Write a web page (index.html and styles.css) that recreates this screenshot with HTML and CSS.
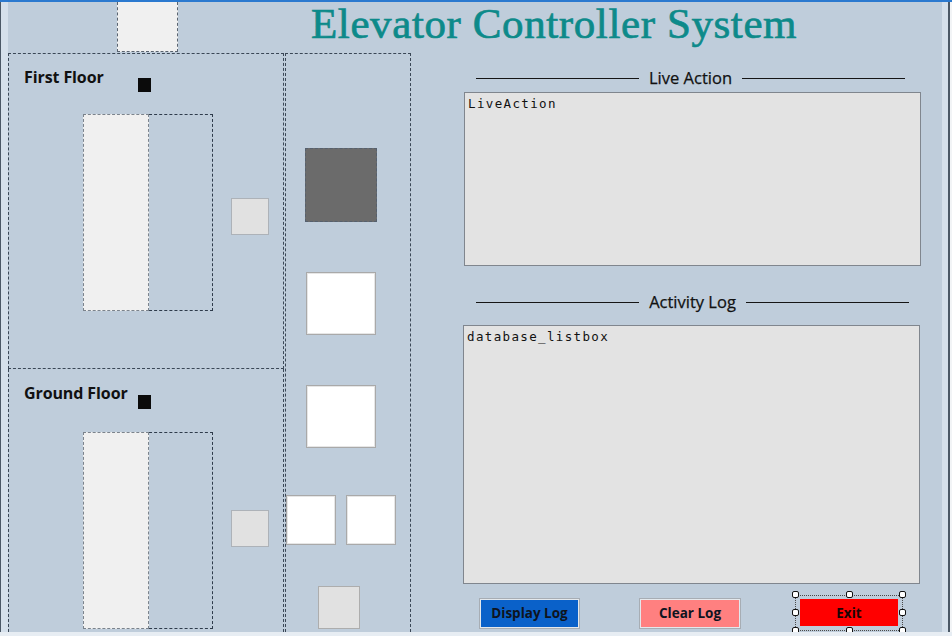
FILE: index.html
```html
<!DOCTYPE html>
<html>
<head>
<meta charset="utf-8">
<title>Elevator Controller System</title>
<link rel="stylesheet" href="styles.css">
</head>
<body>
<div class="window">
  <header class="header">
    <div class="tab-box"></div>
    <h1 class="title">Elevator Controller System</h1>
  </header>
  <main class="body">
    <section class="floors">
      <div class="floor floor-first">
        <div class="floor-head">
          <span class="floor-label">First Floor</span>
          <span class="indicator"></span>
        </div>
        <div class="floor-body">
          <div class="shaft"><div class="car"></div></div>
          <div class="call-btn"></div>
        </div>
      </div>
      <div class="floor floor-ground">
        <div class="floor-head">
          <span class="floor-label">Ground Floor</span>
          <span class="indicator"></span>
        </div>
        <div class="floor-body">
          <div class="shaft"><div class="car"></div></div>
          <div class="call-btn"></div>
        </div>
      </div>
    </section>
    <section class="controls">
      <div class="ctl ctl-dark"></div>
      <div class="ctl ctl-white ctl-w1"></div>
      <div class="ctl ctl-white ctl-w2"></div>
      <div class="ctl-pair">
        <div class="ctl ctl-small"></div>
        <div class="ctl ctl-small"></div>
      </div>
      <div class="ctl ctl-grey"></div>
    </section>
    <section class="logs">
      <div class="group-head head-live">
        <span class="rule"></span><span class="group-title">Live Action</span><span class="rule"></span>
      </div>
      <div class="textbox live">LiveAction</div>
      <div class="group-head head-activity">
        <span class="rule"></span><span class="group-title">Activity Log</span><span class="rule"></span>
      </div>
      <div class="textbox listbox">database_listbox</div>
      <div class="buttons">
        <div class="btn btn-display">Display Log</div>
        <div class="btn btn-clear">Clear Log</div>
        <div class="exit-select">
          <div class="btn-exit">Exit</div>
          <span class="handle h-tl"></span><span class="handle h-tc"></span><span class="handle h-tr"></span>
          <span class="handle h-ml"></span><span class="handle h-mr"></span>
          <span class="handle h-bl"></span><span class="handle h-bc"></span><span class="handle h-br"></span>
        </div>
      </div>
    </section>
  </main>
</div>
</body>
</html>
```
FILE: styles.css
```css
* { box-sizing: border-box; }
html, body { margin: 0; padding: 0; }
body {
  width: 952px;
  height: 636px;
  overflow: hidden;
  font-family: "Open Sans", "Noto Sans", sans-serif;
  color: #111;
}
.window {
  width: 952px;
  height: 636px;
  display: flex;
  flex-direction: column;
  border-top: 2px solid #2b79cf;
  border-bottom: 4px solid #e7edf3;
  padding-right: 10px;
  overflow: hidden;
  background:
    linear-gradient(to right, #4b5866 0 1px, #d5e0eb 1px 8px, transparent 8px),
    linear-gradient(to left, #f2f4f6 0 2px, #4b5866 2px 4px, #d5e0eb 4px 10px, #bfcddb 10px);
}
.header {
  height: 51px;
  flex-shrink: 0;
  display: flex;
  align-items: flex-start;
}
.tab-box {
  margin-left: 117px;
  width: 61px;
  height: 50px;
  background: #f0f0f0;
  border: 1px dashed #5a6470;
  border-top: none;
}
.title {
  margin: 1px 0 0 133px;
  font-family: "Liberation Serif", "Times New Roman", serif;
  font-weight: 400;
  font-size: 43px;
  line-height: 42px;
  letter-spacing: 0.6px;
  -webkit-text-stroke: 0.7px #0d8a8a;
  color: #0d8a8a;
  white-space: nowrap;
}
.body {
  flex: 1;
  min-height: 0;
  display: flex;
  padding-left: 8px;
}
.floors {
  width: 276px;
  flex-shrink: 0;
  display: flex;
  flex-direction: column;
}
.floor {
  border: 1px dashed #3a4756;
  padding-left: 15px;
}
.floor-first {
  height: 316px;
  padding-top: 13px;
}
.floor-ground {
  flex: 1;
  border-top: none;
  border-bottom: none;
  padding-top: 14px;
}
.floor-head {
  display: flex;
  align-items: flex-start;
  height: 20px;
}
.floor-label {
  flex: 0 0 114px;
  font-weight: 700;
  font-size: 16px;
  line-height: 20px;
  letter-spacing: -0.1px;
  color: #111;
  white-space: nowrap;
}
.indicator {
  width: 13px;
  height: 14px;
  background: #0b0b0b;
  margin-top: 11px;
}
.floor-ground .indicator { margin-top: 12px; }
.floor-body {
  display: flex;
  align-items: flex-start;
  margin-left: 59px;
}
.floor-first .floor-body { margin-top: 27px; }
.floor-ground .floor-body { margin-top: 29px; }
.shaft {
  width: 130px;
  height: 197px;
  border: 1px dashed #2e3b4b;
  display: flex;
}
.car {
  width: 66px;
  margin: -1px 0 -1px -1px;
  border: 1px dashed #7b838c;
  background: #f0f0f0;
}
.call-btn {
  width: 38px;
  height: 37px;
  margin-left: 18px;
  background: #e1e1e1;
  border: 1px solid #adb2b8;
}
.floor-first .call-btn { margin-top: 84px; }
.floor-ground .call-btn { margin-top: 78px; }

.controls {
  width: 126px;
  flex-shrink: 0;
  margin-left: 1px;
  border: 1px dashed #3a4756;
  border-bottom: none;
  display: flex;
  flex-direction: column;
  align-items: flex-start;
}
.ctl-dark {
  margin: 94px 0 0 19px;
  width: 72px;
  height: 74px;
  background: #6b6b6b;
  border: 1px dashed #55606e;
}
.ctl-white {
  width: 70px;
  height: 63px;
  margin-left: 20px;
  background: #fff;
  border: 1px solid #a9a9a9;
  box-shadow: inset 0 0 0 1px #e6e6e6;
}
.ctl-w1 { margin-top: 50px; }
.ctl-w2 { margin-top: 50px; }
.ctl-pair {
  display: flex;
  gap: 10px;
  margin-top: 47px;
}
.ctl-small {
  width: 50px;
  height: 50px;
  background: #fff;
  border: 1px solid #a9a9a9;
  box-shadow: inset 0 0 0 1px #e6e6e6;
}
.ctl-grey {
  margin: 41px 0 0 32px;
  width: 42px;
  height: 43px;
  background: #e1e1e1;
  border: 1px solid #adadad;
}

.logs {
  flex: 1;
  min-width: 0;
  display: flex;
  flex-direction: column;
  padding-left: 53px;
}
.group-head {
  width: 457px;
  height: 20px;
  display: flex;
  align-items: center;
  padding: 0 14px 0 12px;
}
.rule {
  flex: 1;
  height: 1px;
  background: #151515;
}
.group-title {
  padding: 0 10px;
  font-size: 16.5px;
  font-weight: 400;
  line-height: 20px;
  -webkit-text-stroke: 0.25px #111;
  color: #111;
  white-space: nowrap;
}
.head-live { margin-top: 15px; padding-right: 16px; }
.head-activity { margin-top: 26px; padding-right: 12px; }
.textbox {
  width: 457px;
  border: 1px solid #80868e;
  background: #e3e3e3;
  font-family: "DejaVu Sans Mono", "Liberation Mono", monospace;
  font-size: 12.5px;
  line-height: 15px;
  letter-spacing: 1.35px;
  padding: 3px 3px;
  color: #111;
}
.live {
  margin-top: 4px;
  height: 174px;
}
.listbox {
  margin-top: 13px;
  margin-left: -1px;
  height: 259px;
}
.buttons {
  margin-top: 11px;
  display: flex;
  align-items: center;
}
.btn {
  height: 31px;
  width: 101px;
  border: 1px solid #a7adb4;
  box-shadow: inset 0 0 0 1px #e4e8ec;
  display: flex;
  align-items: center;
  justify-content: center;
  font-weight: 700;
  font-size: 13.5px;
  color: #0e1420;
}
.btn-display {
  margin-left: 15px;
  background: #0a61c9;
}
.btn-clear {
  margin-left: 59px;
  width: 102px;
  background: #ff8080;
}
.exit-select {
  position: relative;
  margin-left: 54px;
  width: 108px;
  height: 36px;
  border: 1px dotted #4a4a4a;
  padding: 3px 4px 4px 4px;
}
.btn-exit {
  width: 98px;
  height: 27px;
  background: #ff0000;
  display: flex;
  align-items: center;
  justify-content: center;
  font-weight: 700;
  font-size: 13.5px;
  color: #1a0505;
}
.handle {
  position: absolute;
  width: 7px;
  height: 7px;
  border: 1px solid #111;
  background: #fff;
  border-radius: 2px;
}
.h-tl { top: -5px; left: -4px; }
.h-tc { top: -5px; left: 50px; }
.h-tr { top: -5px; right: -4px; }
.h-ml { top: 13px; left: -4px; }
.h-mr { top: 13px; right: -4px; }
.h-bl { bottom: -4px; left: -4px; }
.h-bc { bottom: -4px; left: 50px; }
.h-br { bottom: -4px; right: -4px; }
```
